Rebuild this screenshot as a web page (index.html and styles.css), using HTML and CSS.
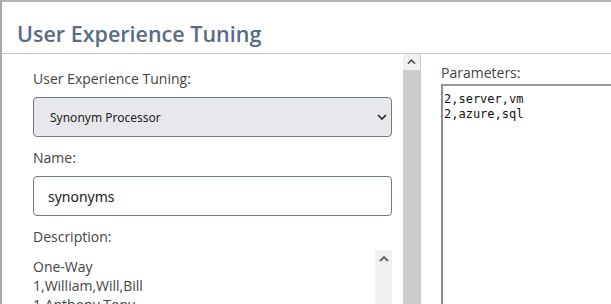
FILE: index.html
```html
<!DOCTYPE html>
<html lang="en">
<head>
  <meta charset="UTF-8" />
  <title>User Experience Tuning</title>
  <link rel="stylesheet" href="styles.css">
</head>
<body>
  <div class="window">
    <div class="header">
      <h1>User Experience Tuning</h1>
    </div>

    <div class="content">
      <div class="pane-left">
        <label for="tuning">User Experience Tuning:</label>
        <div class="select-wrap">
          <select id="tuning">
            <option>Synonym Processor</option>
          </select>
          <svg class="chevron" width="10" height="6" viewBox="0 0 10 6"><path d="M1 1l4 4 4-4" fill="none" stroke="#222" stroke-width="1.6"/></svg>
        </div>

        <label for="name">Name:</label>
        <input id="name" type="text" value="synonyms">

        <label>Description:</label>
        <div class="desc">
          <div class="desc-text">One-Way<br>1,William,Will,Bill<br>1,Anthony,Tony<br>Two-Way</div>
          <div class="scroll small">
            <svg width="10" height="6" viewBox="0 0 10 6"><path d="M1 5l4-4 4 4" fill="none" stroke="#606060" stroke-width="1.8"/></svg>
          </div>
        </div>
      </div>

      <div class="scroll main">
        <div class="scroll-btn">
          <svg width="9" height="6" viewBox="0 0 10 6"><path d="M1 5l4-4 4 4" fill="none" stroke="#505050" stroke-width="1.8"/></svg>
        </div>
      </div>

      <div class="pane-right">
        <label for="params">Parameters:</label>
        <div id="params" class="params">2,server,vm
2,azure,sql</div>
      </div>
    </div>
  </div>
</body>
</html>
```

FILE: styles.css
```css
html, body { margin: 0; height: 100%; overflow: hidden; background: #fff; }
body { font-family: "Open Sans", Arial, sans-serif; color: #444; }

.window { height: 100%; border-top: 2px solid #b4b4b4; border-left: 2px solid #a9a9a9; box-sizing: border-box; display: flex; flex-direction: column; }

.header { height: 52px; border-bottom: 1px solid #c3c9cf; padding-left: 15px; display: flex; align-items: center; box-sizing: border-box; flex: none; }
.header h1 { margin: 12px 0 0; font-size: 21.5px; font-weight: 600; color: #5a6b83; }

.content { flex: 1; display: flex; min-height: 0; }

.pane-left { width: 401px; padding: 15px 11px 0 31px; box-sizing: border-box; flex: none; }
label { display: block; font-size: 14px; line-height: 20px; color: #444; }

.select-wrap { position: relative; margin: 8px 0 11px; }
select { -webkit-appearance: none; appearance: none; width: 100%; height: 40px; box-sizing: border-box; background: #e8e8ec; border: 1px solid #6e7a88; border-radius: 4px; padding: 0 16px; font-family: "Noto Sans", Arial, sans-serif; font-size: 12px; color: #222; }
.chevron { position: absolute; right: 5px; top: 17px; pointer-events: none; }

input[type=text] { display: block; width: 100%; height: 40px; box-sizing: border-box; margin: 8px 0 11px; border: 1px solid #6e7a88; border-radius: 4px; padding: 0 14px; font-family: "Noto Sans", Arial, sans-serif; font-size: 14px; color: #222; }

.desc { display: flex; margin-top: 3px; height: 54px; overflow: hidden; }
.desc-text { flex: 1; font-size: 14px; line-height: 19px; padding-top: 7px; color: #444; }

.scroll { background: #cdcdcd; flex: none; }
.scroll.small { width: 17px; background: #f0f0f0; display: flex; justify-content: center; align-items: flex-start; padding-top: 6px; box-sizing: border-box; }
.scroll.main { width: 17px; border-right: 1px solid #c5ccd4; }
.scroll-btn { height: 16px; background: #f0f0f0; display: flex; justify-content: center; align-items: center; }

.pane-right { flex: 1; padding: 9px 0 0 20px; min-width: 0; }
.params { margin-top: 1px; height: 240px; border-top: 2px solid #9a9a9a; border-left: 2px solid #8e8e8e; padding: 6px 1px 0; font-family: "DejaVu Sans Mono", monospace; font-size: 12px; line-height: 15px; white-space: pre; color: #111; }
```
